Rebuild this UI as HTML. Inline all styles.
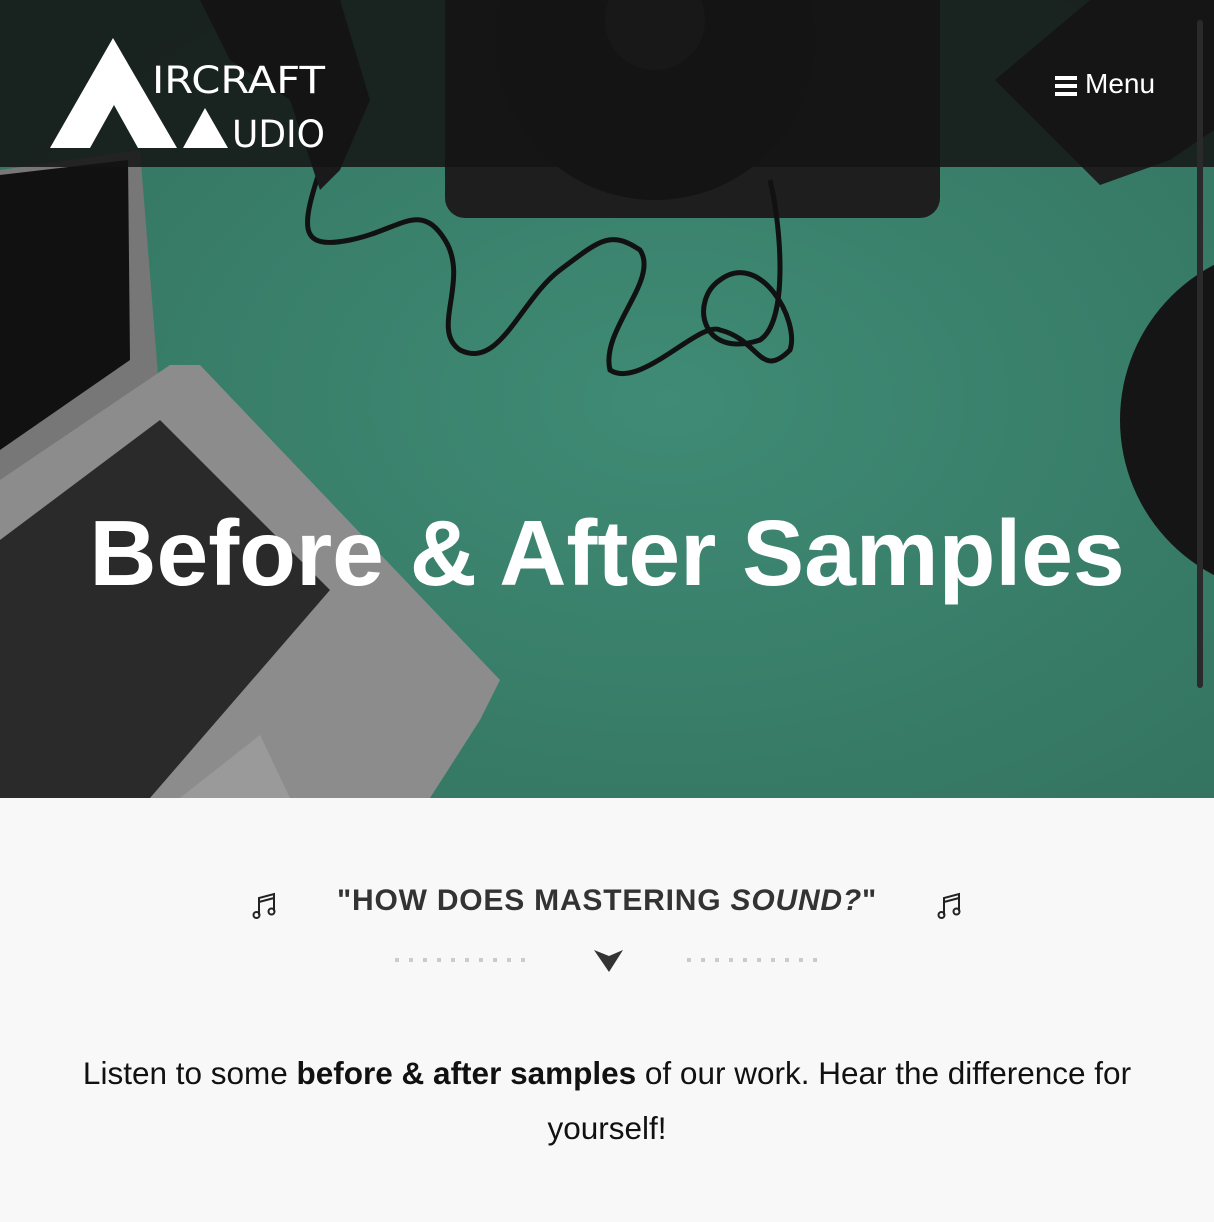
<!DOCTYPE html>
<html><head><meta charset="utf-8"><style>
html,body{margin:0;padding:0;width:1214px;height:1222px;overflow:hidden;background:#f8f8f8;font-family:"Liberation Sans",sans-serif}
.hero{position:absolute;left:0;top:0;width:1214px;height:798px;overflow:hidden}
.title{position:absolute;left:0;width:1214px;top:500px;text-align:center;color:#fff;font-weight:bold;font-size:93px;letter-spacing:0px;white-space:nowrap}
.menu{position:absolute;left:1085px;top:68px;color:#fff;font-size:28px}
.h2{position:absolute;top:884px;left:0;width:1214px;text-align:center;font-weight:bold;font-size:30px;letter-spacing:0.8px;color:#333}
.p{position:absolute;top:1046px;left:57px;width:1100px;text-align:center;font-size:31.5px;line-height:55px;color:#111}
</style></head><body>
<div class="hero">
<svg width="1214" height="798" viewBox="0 0 1214 798">
<defs><radialGradient id="g" cx="0.55" cy="0.5" r="0.7"><stop offset="0" stop-color="#3f8b75"/><stop offset="1" stop-color="#33735f"/></radialGradient></defs>
<rect width="1214" height="798" fill="url(#g)"/>
<rect x="445" y="-20" width="495" height="238" rx="20" fill="#1e1e1e"/>
<circle cx="655" cy="40" r="160" fill="#141414"/>
<circle cx="655" cy="20" r="50" fill="#333"/>
<path d="M320 170 C300 230 300 250 350 240 C400 230 420 200 445 240 C470 280 430 330 460 350 C500 370 520 300 560 270 C600 240 610 230 640 250 C660 280 600 330 610 370 C640 390 700 320 720 330 C760 340 760 380 790 350 C800 320 760 250 720 280 C690 300 700 360 760 340 C790 320 780 220 770 180" fill="none" stroke="#111" stroke-width="5"/>
<path d="M200 0 L230 60 L290 100 L320 190 L340 170 L370 100 L340 0 Z" fill="#1a1a1a"/>
<polygon points="995,80 1090,0 1214,0 1214,130 1170,160 1100,185" fill="#1e1e1e"/>
<circle cx="1295" cy="420" r="175" fill="#151515"/>
<polygon points="0,170 140,150 160,400 0,520" fill="#777"/>
<polygon points="0,175 128,160 130,360 0,450" fill="#111"/>
<polygon points="0,480 170,365 200,365 500,680 480,720 430,798 0,798" fill="#8c8c8c"/>
<polygon points="0,540 160,420 330,590 150,798 0,798" fill="#2a2a2a"/>
<polygon points="180,798 260,735 290,798" fill="#9a9a9a"/>
<rect width="1214" height="167" fill="rgba(20,20,20,0.85)"/>
<rect x="1197" y="20" width="6" height="668" rx="3" fill="#2a2a2a"/>
<polygon points="113,38 50,148 90,148 114,105 138,148 177,148" fill="#fff"/>
<polygon points="205,108 183,148 228,148" fill="#fff"/>
<text x="152" y="93" fill="#fff" font-family="DejaVu Sans" font-size="37" textLength="173" lengthAdjust="spacingAndGlyphs">IRCRAFT</text>
<text x="232" y="147" fill="#fff" font-family="DejaVu Sans" font-size="37" textLength="93" lengthAdjust="spacingAndGlyphs">UDIO</text>
<rect x="1055" y="76" width="22" height="4" fill="#fff"/><rect x="1055" y="84" width="22" height="4" fill="#fff"/><rect x="1055" y="92" width="22" height="4" fill="#fff"/>
</svg>
<div class="menu">Menu</div>
<div class="title">Before &amp; After Samples</div>
</div>
<div class="h2">"HOW DOES MASTERING <i>SOUND?</i>"</div>
<svg style="position:absolute;left:252px;top:892px" width="26" height="28" viewBox="0 0 26 28"><path d="M7 23 V6 L22 2 V19 M7 10 L22 6" fill="none" stroke="#222" stroke-width="2"/><circle cx="4.5" cy="23" r="3" fill="none" stroke="#222" stroke-width="2"/><circle cx="19.5" cy="19.5" r="3" fill="none" stroke="#222" stroke-width="2"/></svg>
<svg style="position:absolute;left:937px;top:892px" width="26" height="28" viewBox="0 0 26 28"><path d="M7 23 V6 L22 2 V19 M7 10 L22 6" fill="none" stroke="#222" stroke-width="2"/><circle cx="4.5" cy="23" r="3" fill="none" stroke="#222" stroke-width="2"/><circle cx="19.5" cy="19.5" r="3" fill="none" stroke="#222" stroke-width="2"/></svg>
<svg style="position:absolute;left:390px;top:945px" width="440" height="30">
<g fill="#ccc">
<rect x="5" y="13" width="4" height="4"/><rect x="19" y="13" width="4" height="4"/><rect x="33" y="13" width="4" height="4"/><rect x="47" y="13" width="4" height="4"/><rect x="61" y="13" width="4" height="4"/><rect x="75" y="13" width="4" height="4"/><rect x="89" y="13" width="4" height="4"/><rect x="103" y="13" width="4" height="4"/><rect x="117" y="13" width="4" height="4"/><rect x="131" y="13" width="4" height="4"/>
<rect x="297" y="13" width="4" height="4"/><rect x="311" y="13" width="4" height="4"/><rect x="325" y="13" width="4" height="4"/><rect x="339" y="13" width="4" height="4"/><rect x="353" y="13" width="4" height="4"/><rect x="367" y="13" width="4" height="4"/><rect x="381" y="13" width="4" height="4"/><rect x="395" y="13" width="4" height="4"/><rect x="409" y="13" width="4" height="4"/><rect x="423" y="13" width="4" height="4"/>
</g>
<polygon points="204,5 233,5 219,27" fill="#333"/><polygon points="204,5 219,11 233,5" fill="#f8f8f8"/>
</svg>
<div class="p">Listen to some <b>before &amp; after samples</b> of our work. Hear the difference for yourself!</div>
</body></html>
